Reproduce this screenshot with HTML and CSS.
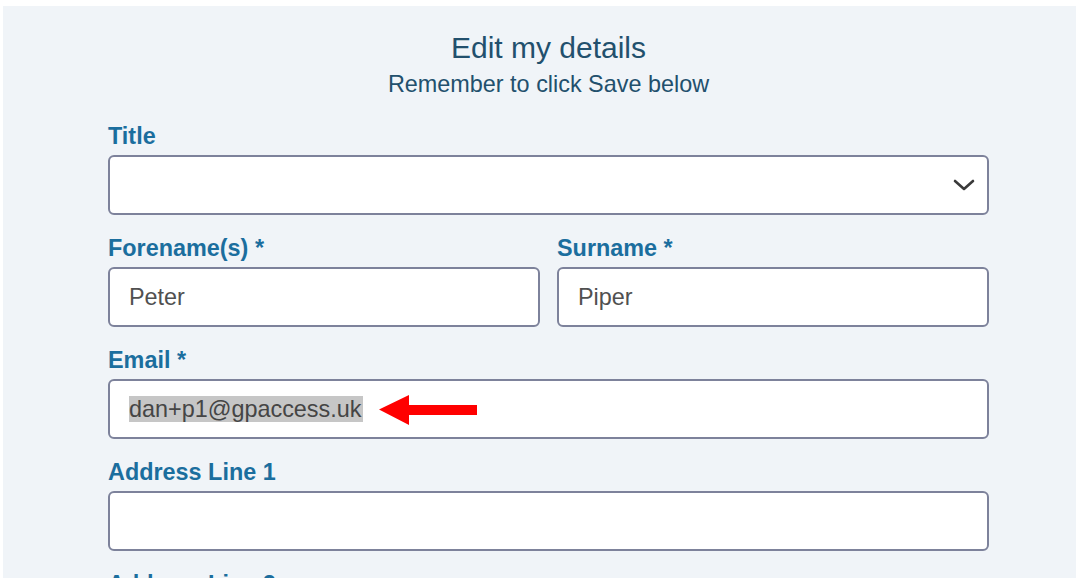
FILE: index.html
```
<!DOCTYPE html>
<html lang="en">
<head>
<meta charset="utf-8">
<title>Edit my details</title>
<link rel="stylesheet" href="styles.css">
</head>
<body>
<div class="panel">
  <div class="form">
    <h1 class="heading">Edit my details</h1>
    <p class="subheading">Remember to click Save below</p>

    <div class="field">
      <div class="label">Title</div>
      <div class="input select">
        <svg class="chevron" width="22" height="12" viewBox="0 0 22 12"><path d="M2 2 L11 10 L20 2" fill="none" stroke="#3a3a3a" stroke-width="2.6" stroke-linecap="round" stroke-linejoin="round"/></svg>
      </div>
    </div>

    <div class="row">
      <div class="field">
        <div class="label">Forename(s) *</div>
        <div class="input"><span class="value">Peter</span></div>
      </div>
      <div class="field">
        <div class="label">Surname *</div>
        <div class="input"><span class="value">Piper</span></div>
      </div>
    </div>

    <div class="field">
      <div class="label">Email *</div>
      <div class="input email">
        <span class="value selected">dan+p1@gpaccess.uk</span>
        <svg class="arrow" width="100" height="32" viewBox="0 0 100 32"><polygon points="2,15.5 32,1 32,11 101,11 101,21 32,21 32,31" fill="#ff0000"/></svg>
      </div>
    </div>

    <div class="field">
      <div class="label">Address Line 1</div>
      <div class="input"></div>
    </div>

    <div class="field">
      <div class="label">Address Line 2</div>
      <div class="input"></div>
    </div>
  </div>
</div>
</body>
</html>
```

FILE: styles.css
```
html, body {
  margin: 0;
  padding: 0;
  background: #ffffff;
}

body {
  font-family: "Liberation Sans", Arial, sans-serif;
}

.panel {
  margin: 6px 2px 0 3px;
  height: 572px;
  background: #f0f4f8;
  overflow: hidden;
  padding: 24px 87px 0 105px;
  box-sizing: border-box;
}

.form {
  display: flex;
  flex-direction: column;
}

.heading {
  margin: 0;
  font-size: 30px;
  line-height: 36px;
  font-weight: normal;
  color: #22506d;
  text-align: center;
}

.subheading {
  margin: 4px 0 24px;
  font-size: 23.4px;
  line-height: 28px;
  color: #22506d;
  text-align: center;
}

.field {
  display: flex;
  flex-direction: column;
  margin-bottom: 19px;
}

.row {
  display: grid;
  grid-template-columns: 1fr 1fr;
  column-gap: 17px;
}

.label {
  font-size: 23.4px;
  line-height: 28px;
  font-weight: bold;
  color: #1b6e9e;
  margin-bottom: 5px;
}

.input {
  height: 60px;
  box-sizing: border-box;
  background: #ffffff;
  border: 2px solid #7d829b;
  border-radius: 6px;
  display: flex;
  align-items: center;
  padding: 0 19px;
  font-size: 23.4px;
  color: #505050;
}

.select {
  justify-content: flex-end;
  padding-right: 12px;
}

.value {
  line-height: 26px;
}

.selected {
  background: #c6c6c6;
  color: #454545;
  padding-right: 2px;
}

.email {
  gap: 14px;
}

.arrow {
  display: block;
  margin-top: 2px;
}
```
